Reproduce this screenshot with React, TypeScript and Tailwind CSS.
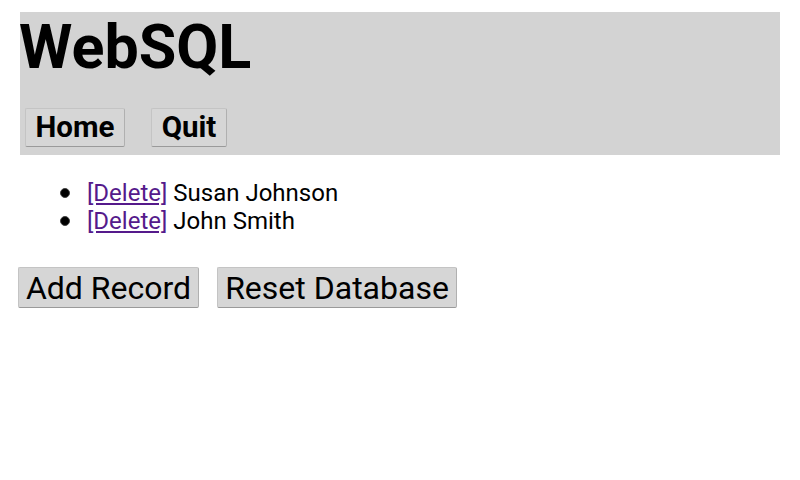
export default function App() {
  const btn =
    "flex items-center justify-center bg-[#d6d6d6] border border-[#c4c4c4] border-b-[#9a9a9a] border-r-[#b0b0b0] rounded-[2px] text-black";
  const items = ["Susan Johnson", "John Smith"];
  return (
    <div className="w-[800px] h-[480px] bg-white" style={{ fontFamily: "Roboto, 'Noto Sans', sans-serif" }}>
      <div className="pt-[12px] px-[20px]">
        <div className="h-[143px] bg-[#d3d3d3] flex flex-col">
          <h1 className="text-[61px] font-bold leading-[70px] m-0 -ml-[1px]">WebSQL</h1>
          <div className="flex gap-[26px] mt-[26px] ml-[5px]">
            <button className={`${btn} h-[39px] w-[100px] text-[29.5px] font-bold`}>Home</button>
            <button className={`${btn} h-[39px] w-[76px] text-[29.5px] font-bold`}>Quit</button>
          </div>
        </div>
      </div>
      <ul className="mt-[24px] text-[24px] leading-[28px] text-black">
        {items.map((name) => (
          <li key={name} className="flex items-center">
            <span className="ml-[60px] mr-[17px] w-[10px] h-[10px] rounded-full bg-black border border-[#444]" />
            <span>
              <a href="#" className="text-[#551a8b] underline">[Delete]</a> {name}
            </span>
          </li>
        ))}
      </ul>
      <div className="flex gap-[18px] mt-[32px] ml-[18px]">
        <button className={`${btn} h-[41px] w-[181px] text-[32px]`}>Add Record</button>
        <button className={`${btn} h-[41px] w-[240px] text-[32px]`}>Reset Database</button>
      </div>
    </div>
  );
}
